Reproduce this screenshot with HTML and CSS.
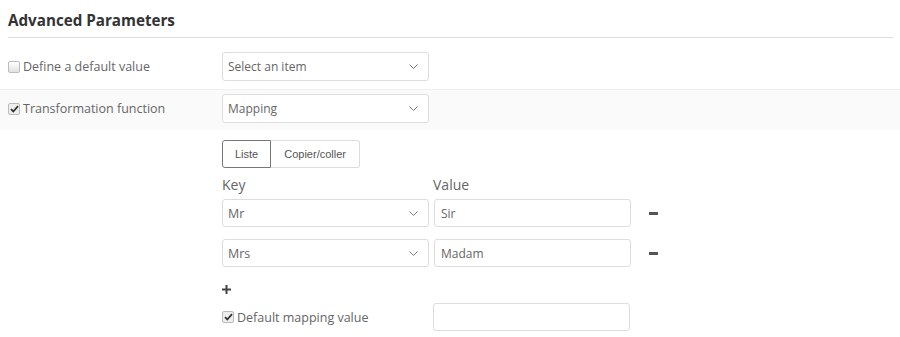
FILE: index.html
```html
<!DOCTYPE html>
<html lang="en">
<head>
  <meta charset="UTF-8" />
  <meta name="viewport" content="width=device-width, initial-scale=1.0"/>
  <title>Advanced Parameters</title>
  <link rel="stylesheet" href="styles.css">
</head>
<body>
  <h4 class="section-title">Advanced Parameters</h4>

  <div class="param-row">
    <label class="param-label">
      <span class="check"></span>
      Define a default value
    </label>
    <div class="select-box">
      <span>Select an item</span>
      <svg class="chevron" width="9" height="5" viewBox="0 0 9 5"><path d="M0.5 0.5l4 4 4-4" fill="none" stroke="#777" stroke-width="1"/></svg>
    </div>
  </div>

  <div class="param-row shaded">
    <label class="param-label">
      <span class="check checked"><svg width="9" height="8" viewBox="0 0 9 8"><path d="M1 4.2l2.3 2.3L8 1.2" fill="none" stroke="#333" stroke-width="1.8"/></svg></span>
      Transformation function
    </label>
    <div class="select-box">
      <span>Mapping</span>
      <svg class="chevron" width="9" height="5" viewBox="0 0 9 5"><path d="M0.5 0.5l4 4 4-4" fill="none" stroke="#777" stroke-width="1"/></svg>
    </div>
  </div>

  <div class="mapping">
    <div class="btn-group">
      <div class="tab-btn active">Liste</div>
      <div class="tab-btn">Copier/coller</div>
    </div>

    <div class="map-head">
      <div class="col-key">Key</div>
      <div class="col-value">Value</div>
    </div>

    <div class="map-row">
      <div class="select-box key-select">
        <span>Mr</span>
        <svg class="chevron" width="9" height="5" viewBox="0 0 9 5"><path d="M0.5 0.5l4 4 4-4" fill="none" stroke="#777" stroke-width="1"/></svg>
      </div>
      <div class="text-input">Sir</div>
      <div class="remove"></div>
    </div>

    <div class="map-row">
      <div class="select-box key-select">
        <span>Mrs</span>
        <svg class="chevron" width="9" height="5" viewBox="0 0 9 5"><path d="M0.5 0.5l4 4 4-4" fill="none" stroke="#777" stroke-width="1"/></svg>
      </div>
      <div class="text-input">Madam</div>
      <div class="remove"></div>
    </div>

    <div class="add">
      <svg width="9" height="9" viewBox="0 0 9 9"><path d="M4.5 0v9M0 4.5h9" stroke="#444" stroke-width="2"/></svg>
    </div>

    <div class="default-row">
      <label class="param-label default-label">
        <span class="check checked"><svg width="9" height="8" viewBox="0 0 9 8"><path d="M1 4.2l2.3 2.3L8 1.2" fill="none" stroke="#333" stroke-width="1.8"/></svg></span>
        Default mapping value
      </label>
      <div class="text-input"></div>
    </div>
  </div>
</body>
</html>
```

FILE: styles.css
```css
body {
  margin: 0;
  font-family: "Open Sans", sans-serif;
  color: #666;
  background: #fff;
}

.section-title {
  margin: 0 7px 0 8px;
  padding: 12px 0 8px;
  font-size: 15.2px;
  font-weight: bold;
  line-height: 17px;
  color: #333;
  border-bottom: 1px solid #ddd;
}

.param-row {
  display: flex;
  align-items: center;
  padding: 14px 8px 8px;
}

.param-row.shaded {
  background: #fafafa;
  border-top: 1px solid #eee;
  padding: 4px 8px 7px;
}

.param-label {
  display: flex;
  align-items: center;
  gap: 3px;
  width: 214px;
  font-size: 12.5px;
}

.check {
  width: 10px;
  height: 10px;
  border: 1px solid #bbb;
  border-radius: 2px;
  background: linear-gradient(#fff, #e2e2e2);
  display: flex;
  align-items: center;
  justify-content: center;
}

.check.checked {
  background: #eee;
}

.select-box {
  box-sizing: border-box;
  width: 207px;
  height: 29px;
  border: 1px solid #ddd;
  border-radius: 3px;
  background: #fff;
  display: flex;
  align-items: center;
  justify-content: space-between;
  padding: 0 10px 0 5px;
  font-size: 12px;
  color: #666;
}

.chevron {
  flex: none;
}

.mapping {
  padding: 10px 0 0 222px;
}

.btn-group {
  display: flex;
}

.tab-btn {
  box-sizing: border-box;
  height: 28px;
  padding: 0 12px;
  display: flex;
  align-items: center;
  border: 1px solid #ddd;
  font-family: "Liberation Sans", Arial, sans-serif;
  font-size: 11px;
  color: #555;
  background: #fff;
}

.tab-btn:first-child {
  border-radius: 3px 0 0 3px;
}

.tab-btn:last-child {
  border-left: none;
  border-radius: 0 3px 3px 0;
  padding: 0 13px;
}

.tab-btn.active {
  border-color: #777;
}

.map-head {
  display: flex;
  font-size: 14px;
  line-height: 20px;
  margin: 7px 0 4px;
}

.col-key {
  width: 211px;
}

.map-row {
  display: flex;
  align-items: center;
  margin-bottom: 12px;
}

.key-select {
  height: 28px;
  margin-right: 5px;
  font-size: 12.5px;
}

.text-input {
  box-sizing: border-box;
  width: 197px;
  height: 28px;
  border: 1px solid #ddd;
  border-radius: 3px;
  background: #fff;
  display: flex;
  align-items: center;
  padding: 0 6px;
  font-size: 12px;
  color: #666;
}

.remove {
  width: 9px;
  height: 3px;
  background: #555;
  margin-left: 18px;
}

.add {
  display: flex;
  padding: 6px 0 0 0;
  height: 12px;
}

.default-row {
  display: flex;
  align-items: center;
  padding-top: 6px;
}

.default-label {
  width: 211px;
}
```
